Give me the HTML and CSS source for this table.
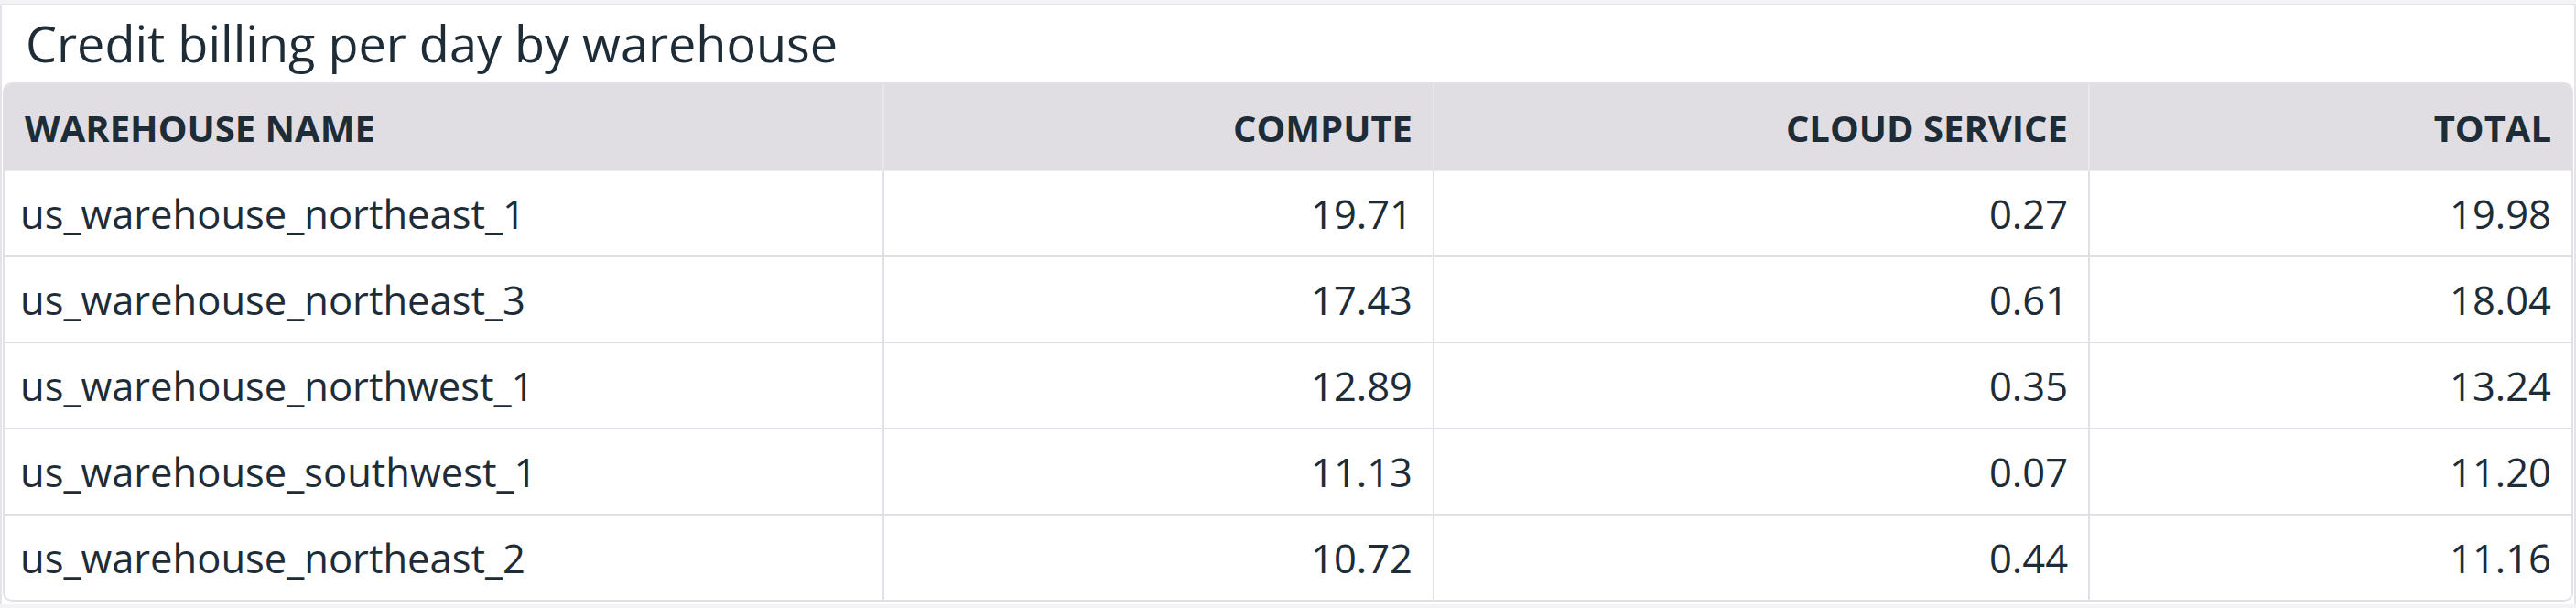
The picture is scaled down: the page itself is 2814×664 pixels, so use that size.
FILE: index.html
```html
<!DOCTYPE html>
<html lang="en">
<head>
<meta charset="utf-8">
<title>Credit billing per day by warehouse</title>
<link rel="stylesheet" href="styles.css">
</head>
<body>
<section class="widget">
  <h2 class="widget-title">Credit billing per day by warehouse</h2>
  <table class="data-table">
    <colgroup>
      <col class="col-name">
      <col class="col-compute">
      <col class="col-cloud">
      <col class="col-total">
    </colgroup>
    <thead>
      <tr>
        <th class="left">WAREHOUSE NAME</th>
        <th class="num">COMPUTE</th>
        <th class="num">CLOUD SERVICE</th>
        <th class="num">TOTAL</th>
      </tr>
    </thead>
    <tbody>
      <tr><td class="left">us_warehouse_northeast_1</td><td class="num">19.71</td><td class="num">0.27</td><td class="num">19.98</td></tr>
      <tr><td class="left">us_warehouse_northeast_3</td><td class="num">17.43</td><td class="num">0.61</td><td class="num">18.04</td></tr>
      <tr><td class="left">us_warehouse_northwest_1</td><td class="num">12.89</td><td class="num">0.35</td><td class="num">13.24</td></tr>
      <tr><td class="left">us_warehouse_southwest_1</td><td class="num">11.13</td><td class="num">0.07</td><td class="num">11.20</td></tr>
      <tr><td class="left">us_warehouse_northeast_2</td><td class="num">10.72</td><td class="num">0.44</td><td class="num">11.16</td></tr>
    </tbody>
  </table>
</section>
</body>
</html>
```
FILE: styles.css
```css
html, body {
  margin: 0;
  padding: 0;
}
body {
  background: #f3f3f5;
  font-family: "Open Sans", "Noto Sans", sans-serif;
  color: #1e2c37;
  padding-top: 4px;
}
.widget {
  background: #ffffff;
  border: 2px solid #e4e3e8;
  border-bottom: none;
  padding: 0 1px 4px 1px;
  height: 656px;
  box-sizing: border-box;
}
.widget-title {
  margin: 0;
  padding: 4px 0 0 25px;
  height: 84px;
  box-sizing: border-box;
  font-size: 54px;
  font-weight: 400;
  line-height: 74px;
  color: #1e2c37;
}
.data-table {
  width: 100%;
  table-layout: fixed;
  border-collapse: separate;
  border-spacing: 0;
  border: 2px solid #e2e0e6;
  border-radius: 10px;
  overflow: hidden;
}
.col-name { width: 959px; }
.col-compute { width: 601px; }
.col-cloud { width: 716px; }
.col-total { width: auto; }
.data-table th {
  background: #e0dee3;
  height: 95px;
  box-sizing: border-box;
  padding: 0 22px;
  font-size: 40px;
  font-weight: 700;
  border-bottom: 1px solid #ecebee;
  border-left: 2px solid #e8e7ec;
  white-space: nowrap;
}
.data-table th:first-child,
.data-table td:first-child {
  border-left: none;
}
.data-table td {
  height: 94px;
  box-sizing: border-box;
  padding: 0 22px 0 17px;
  font-size: 43.5px;
  font-weight: 400;
  border-bottom: 2px solid #e2e0e6;
  border-left: 2px solid #e2e0e6;
  white-space: nowrap;
}
.data-table tbody tr:last-child td {
  border-bottom: none;
  height: 92px;
}
.left { text-align: left; }
.num { text-align: right; }
```
